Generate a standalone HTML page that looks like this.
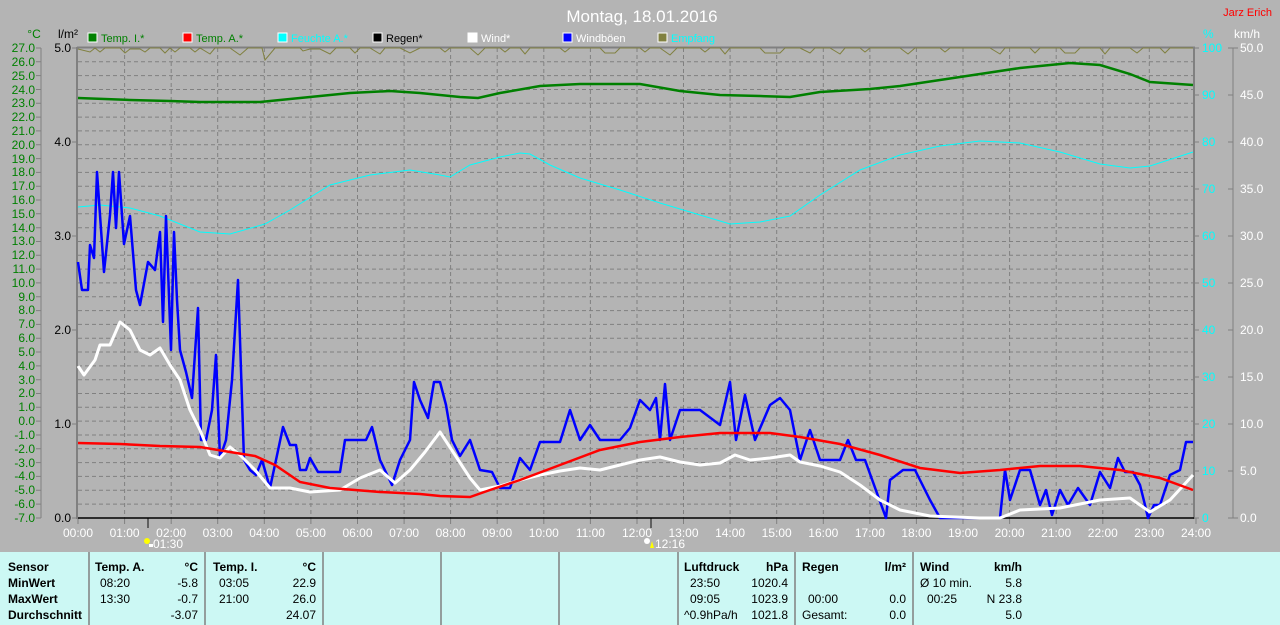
<!DOCTYPE html>
<html><head><meta charset="utf-8"><style>
html,body{margin:0;padding:0;background:#b4b4b4;}
svg{display:block;font-family:"Liberation Sans",sans-serif;}
</style></head><body>
<svg width="1280" height="625" xmlns="http://www.w3.org/2000/svg">
<rect width="1280" height="625" fill="#b4b4b4"/>
<text x="642" y="22" font-size="17" fill="#fff" text-anchor="middle">Montag, 18.01.2016</text>
<text x="1272" y="16" font-size="11" fill="#f00" text-anchor="end">Jarz Erich</text>
<!-- legend -->
<g font-size="11">
<rect x="88" y="33" width="9" height="9" fill="#008000" stroke="#fff"/><text x="101" y="42" fill="#008000">Temp. I.*</text>
<rect x="183" y="33" width="9" height="9" fill="#f00" stroke="#fff"/><text x="196" y="42" fill="#008000">Temp. A.*</text>
<rect x="278" y="33" width="9" height="9" fill="#0ff" stroke="#fff"/><text x="291" y="42" fill="#0ff">Feuchte A.*</text>
<rect x="373" y="33" width="9" height="9" fill="#000" stroke="#fff"/><text x="386" y="42" fill="#000">Regen*</text>
<rect x="468" y="33" width="9" height="9" fill="#fff" stroke="#fff"/><text x="481" y="42" fill="#fff">Wind*</text>
<rect x="563" y="33" width="9" height="9" fill="#00f" stroke="#fff"/><text x="576" y="42" fill="#fff">Windböen</text>
<rect x="658" y="33" width="9" height="9" fill="#808040" stroke="#fff"/><text x="671" y="42" fill="#0ff">Empfang</text>
</g>
<text x="34" y="38" font-size="12" fill="#008000" text-anchor="middle">°C</text>
<text x="58" y="38" font-size="12" fill="#000">l/m²</text>
<text x="1203" y="38" font-size="12" fill="#0ff">%</text>
<text x="1234" y="38" font-size="12" fill="#fff">km/h</text>
<!-- grid -->
<g stroke="#808080" stroke-dasharray="4,3" stroke-width="1">
<path d="M78 61.8H1193M78 75.6H1193M78 89.5H1193M78 103.3H1193M78 117.1H1193M78 130.9H1193M78 144.7H1193M78 158.6H1193M78 172.4H1193M78 186.2H1193M78 200H1193M78 213.8H1193M78 227.7H1193M78 241.5H1193M78 255.3H1193M78 269.1H1193M78 282.9H1193M78 296.8H1193M78 310.6H1193M78 324.4H1193M78 338.2H1193M78 352H1193M78 365.9H1193M78 379.7H1193M78 393.5H1193M78 407.3H1193M78 421.1H1193M78 435H1193M78 448.8H1193M78 462.6H1193M78 476.4H1193M78 490.2H1193M78 504.1H1193"/>
<path d="M124.6 48V518M171.2 48V518M217.7 48V518M264.3 48V518M310.9 48V518M357.5 48V518M404.1 48V518M450.6 48V518M497.2 48V518M543.8 48V518M590.4 48V518M637 48V518M683.5 48V518M730.1 48V518M776.7 48V518M823.3 48V518M869.9 48V518M916.4 48V518M963 48V518M1009.6 48V518M1056.2 48V518M1102.8 48V518M1149.3 48V518"/>
</g>
<!-- axes -->
<g stroke="#808080" stroke-width="1">
<path d="M41 48V518M36 48H41M36 61.8H41M36 75.6H41M36 89.5H41M36 103.3H41M36 117.1H41M36 130.9H41M36 144.7H41M36 158.6H41M36 172.4H41M36 186.2H41M36 200H41M36 213.8H41M36 227.7H41M36 241.5H41M36 255.3H41M36 269.1H41M36 282.9H41M36 296.8H41M36 310.6H41M36 324.4H41M36 338.2H41M36 352H41M36 365.9H41M36 379.7H41M36 393.5H41M36 407.3H41M36 421.1H41M36 435H41M36 448.8H41M36 462.6H41M36 476.4H41M36 490.2H41M36 504.1H41M36 518H41"/>
<path d="M72 48H77M72 142H77M72 236H77M72 330H77M72 424H77M72 518H77"/>
<path d="M1195 48H1199M1195 95H1199M1195 142H1199M1195 189H1199M1195 236H1199M1195 283H1199M1195 330H1199M1195 377H1199M1195 424H1199M1195 471H1199M1195 518H1199"/>
<path d="M1233 48V518M1228 48H1238M1228 95H1233M1228 142H1233M1228 189H1233M1228 236H1233M1228 283H1233M1228 330H1233M1228 377H1233M1228 424H1233M1228 471H1233M1228 518H1238"/>
<path d="M78 518V524M124.6 518V524M171.2 518V524M217.7 518V524M264.3 518V524M310.9 518V524M357.5 518V524M404.1 518V524M450.6 518V524M497.2 518V524M543.8 518V524M590.4 518V524M637 518V524M683.5 518V524M730.1 518V524M776.7 518V524M823.3 518V524M869.9 518V524M916.4 518V524M963 518V524M1009.6 518V524M1056.2 518V524M1102.8 518V524M1149.3 518V524M1196 518V524"/>
</g>
<path d="M148 518V528M651 518V528" stroke="#606060" stroke-width="2"/>
<path d="M77 47V519M77 47.5H1195M1194 47V519" stroke="#808080" stroke-width="2" fill="none"/>
<path d="M78 518H1194" stroke="#000" stroke-width="1.5"/>
<g font-size="12" fill="#008000" text-anchor="end">
<text x="35" y="52">27.0</text><text x="35" y="66">26.0</text><text x="35" y="80">25.0</text><text x="35" y="94">24.0</text><text x="35" y="107">23.0</text><text x="35" y="121">22.0</text><text x="35" y="135">21.0</text><text x="35" y="149">20.0</text><text x="35" y="163">19.0</text><text x="35" y="176">18.0</text><text x="35" y="190">17.0</text><text x="35" y="204">16.0</text><text x="35" y="218">15.0</text><text x="35" y="232">14.0</text><text x="35" y="245">13.0</text><text x="35" y="259">12.0</text><text x="35" y="273">11.0</text><text x="35" y="287">10.0</text><text x="35" y="301">9.0</text><text x="35" y="314">8.0</text><text x="35" y="328">7.0</text><text x="35" y="342">6.0</text><text x="35" y="356">5.0</text><text x="35" y="370">4.0</text><text x="35" y="384">3.0</text><text x="35" y="397">2.0</text><text x="35" y="411">1.0</text><text x="35" y="425">0.0</text><text x="35" y="439">-1.0</text><text x="35" y="453">-2.0</text><text x="35" y="467">-3.0</text><text x="35" y="480">-4.0</text><text x="35" y="494">-5.0</text><text x="35" y="508">-6.0</text><text x="35" y="522">-7.0</text>
</g>
<g font-size="12" fill="#000" text-anchor="end">
<text x="71" y="52">5.0</text><text x="71" y="146">4.0</text><text x="71" y="240">3.0</text><text x="71" y="334">2.0</text><text x="71" y="428">1.0</text><text x="71" y="522">0.0</text>
</g>
<g font-size="12" fill="#0ff">
<text x="1202" y="52">100</text><text x="1202" y="99">90</text><text x="1202" y="146">80</text><text x="1202" y="193">70</text><text x="1202" y="240">60</text><text x="1202" y="287">50</text><text x="1202" y="334">40</text><text x="1202" y="381">30</text><text x="1202" y="428">20</text><text x="1202" y="475">10</text><text x="1202" y="522">0</text>
</g>
<g font-size="12" fill="#fff">
<text x="1240" y="52">50.0</text><text x="1240" y="99">45.0</text><text x="1240" y="146">40.0</text><text x="1240" y="193">35.0</text><text x="1240" y="240">30.0</text><text x="1240" y="287">25.0</text><text x="1240" y="334">20.0</text><text x="1240" y="381">15.0</text><text x="1240" y="428">10.0</text><text x="1240" y="475">5.0</text><text x="1240" y="522">0.0</text>
</g>
<g font-size="12" fill="#fff" text-anchor="middle">
<text x="78" y="537">00:00</text><text x="124.6" y="537">01:00</text><text x="171.2" y="537">02:00</text><text x="217.7" y="537">03:00</text><text x="264.3" y="537">04:00</text><text x="310.9" y="537">05:00</text><text x="357.5" y="537">06:00</text><text x="404.1" y="537">07:00</text><text x="450.6" y="537">08:00</text><text x="497.2" y="537">09:00</text><text x="543.8" y="537">10:00</text><text x="590.4" y="537">11:00</text><text x="637" y="537">12:00</text><text x="683.5" y="537">13:00</text><text x="730.1" y="537">14:00</text><text x="776.7" y="537">15:00</text><text x="823.3" y="537">16:00</text><text x="869.9" y="537">17:00</text><text x="916.4" y="537">18:00</text><text x="963" y="537">19:00</text><text x="1009.6" y="537">20:00</text><text x="1056.2" y="537">21:00</text><text x="1102.8" y="537">22:00</text><text x="1149.3" y="537">23:00</text><text x="1196" y="537">24:00</text>
<text x="168" y="548">01:30</text><text x="670" y="548">12:16</text>
</g>
<circle cx="147" cy="541" r="3" fill="#ff0"/><rect x="149" y="544" width="4" height="3" fill="#fff"/>
<circle cx="647" cy="541" r="3" fill="#fff"/><path d="M650 548L652 541L654 548Z" fill="#ff0"/>
<!-- data -->
<polyline fill="none" stroke="#808040" stroke-width="1" points="78,49 90,52 95,48 100,52 105,48 120,48 125,53 130,49 140,49 145,52 150,48 160,48 165,53 170,48 175,52 180,48 190,48 195,52 200,48 210,54 215,48 230,48 240,55 248,48 262,48 265,60 275,48 300,48 303,51 310,49 320,49 330,54 336,48 350,48 355,53 360,48 370,48 380,54 385,48 400,48 410,53 420,48 440,48 445,52 450,48 470,48 478,55 485,48 500,48 505,52 510,48 520,48 525,54 530,48 560,48 565,52 570,48 600,48 605,53 615,53 620,48 640,48 645,52 650,48 660,48 670,55 677,48 700,48 705,52 710,48 720,48 725,54 730,48 760,48 765,53 780,53 785,48 800,48 810,53 815,48 830,48 840,54 845,48 860,48 865,52 870,48 900,48 908,54 915,48 940,48 945,52 950,48 990,48 1000,54 1005,48 1030,48 1035,53 1040,48 1060,48 1065,53 1075,53 1080,48 1100,48 1105,54 1110,48 1130,48 1137,53 1143,48 1160,48 1165,53 1170,48 1193,48"/>
<polyline fill="none" stroke="#0ff" stroke-width="1" points="78,207 100,205 130,208 160,216 200,232 230,234 265,224 290,210 330,185 370,175 410,170 440,175 450,177 470,165 500,157 520,153 530,154 550,165 580,178 620,190 660,203 700,215 730,224 760,222 790,216 820,195 860,170 900,155 940,146 980,141 1020,143 1060,152 1100,164 1130,168 1150,166 1193,152"/>
<polyline fill="none" stroke="#008000" stroke-width="2.5" points="78,98 130,100 170,101 200,102 260,102 300,98 350,93 390,91 420,93 460,97 478,98 500,93 540,86 580,84 640,84 680,91 720,95 760,96 790,97 820,92 870,89 900,86 940,80 980,74 1020,68 1070,63 1100,65 1130,74 1150,82 1193,85"/>
<polyline fill="none" stroke="#00f" stroke-width="2.5" stroke-linejoin="round" points="78,262 82,290 88,290 90,245 94,258 97,172 100,215 104,272 110,215 113,172 116,228 119,172 124,244 130,216 136,290 140,305 148,262 155,270 160,232 163,322 166,216 171,350 174,232 177,300 180,350 186,372 192,398 198,308 201,440 206,440 212,410 216,355 220,458 226,440 232,380 238,280 244,460 250,470 256,475 262,460 270,488 276,460 283,427 290,445 296,445 300,470 306,470 310,458 318,472 340,472 345,440 366,440 372,427 380,460 392,485 400,460 410,440 414,382 420,400 428,418 434,382 440,382 446,405 452,440 460,456 470,440 480,470 492,472 500,488 510,488 520,458 530,470 540,442 560,442 570,410 580,440 590,425 600,440 620,440 630,428 640,400 650,410 656,398 660,440 665,384 670,440 680,410 700,410 720,425 730,382 736,440 745,395 755,440 770,405 780,398 790,410 800,460 810,430 820,460 840,460 848,440 856,460 865,460 886,518 890,480 903,470 915,470 930,500 940,518 1000,518 1005,470 1010,500 1020,470 1030,470 1040,505 1046,490 1052,515 1060,490 1068,505 1078,488 1090,505 1100,472 1110,488 1118,458 1125,472 1133,472 1140,485 1145,505 1148,518 1154,505 1160,505 1170,475 1180,470 1186,442 1193,442"/>
<polyline fill="none" stroke="#fff" stroke-width="3" stroke-linejoin="round" points="78,366 84,375 95,360 100,345 110,345 120,322 130,330 140,350 150,355 160,348 170,365 180,380 190,410 200,430 210,455 220,458 230,447 240,455 255,470 270,488 290,488 310,492 340,490 360,478 380,470 395,483 410,470 425,452 440,432 455,455 470,478 480,490 500,486 520,480 540,475 560,471 580,468 600,470 620,465 640,460 660,457 680,462 700,465 720,463 735,455 750,460 770,458 790,455 800,462 820,466 840,472 860,485 880,500 900,510 930,516 980,518 1000,518 1020,510 1060,508 1100,500 1130,498 1150,512 1170,500 1193,475"/>
<polyline fill="none" stroke="#f00" stroke-width="2.5" points="78,443 120,444 160,446 200,447 230,452 255,456 275,465 300,482 330,488 380,492 420,494 440,496 470,497 490,490 520,480 560,465 600,450 640,442 680,437 720,433 770,433 800,437 840,444 880,455 920,468 960,473 1000,470 1040,466 1080,466 1120,470 1160,478 1193,490"/>
<!-- table -->
<rect x="0" y="552" width="1280" height="73" fill="#ccf8f4"/>
<path d="M89 552V625M205 552V625M323 552V625M441 552V625M559 552V625M678 552V625M795 552V625M913 552V625" stroke="#808080" stroke-width="1.5"/>
<g font-size="12" fill="#000">
<g font-weight="bold"><text x="8" y="571">Sensor</text><text x="8" y="587">MinWert</text><text x="8" y="603">MaxWert</text><text x="8" y="619">Durchschnitt</text>
<text x="95" y="571">Temp. A.</text><text x="198" y="571" text-anchor="end">°C</text>
<text x="213" y="571">Temp. I.</text><text x="316" y="571" text-anchor="end">°C</text>
<text x="684" y="571">Luftdruck</text><text x="788" y="571" text-anchor="end">hPa</text>
<text x="802" y="571">Regen</text><text x="906" y="571" text-anchor="end">l/m²</text>
<text x="920" y="571">Wind</text><text x="1022" y="571" text-anchor="end">km/h</text></g>
<text x="100" y="587">08:20</text><text x="198" y="587" text-anchor="end">-5.8</text>
<text x="100" y="603">13:30</text><text x="198" y="603" text-anchor="end">-0.7</text>
<text x="198" y="619" text-anchor="end">-3.07</text>
<text x="219" y="587">03:05</text><text x="316" y="587" text-anchor="end">22.9</text>
<text x="219" y="603">21:00</text><text x="316" y="603" text-anchor="end">26.0</text>
<text x="316" y="619" text-anchor="end">24.07</text>
<text x="690" y="587">23:50</text><text x="788" y="587" text-anchor="end">1020.4</text>
<text x="690" y="603">09:05</text><text x="788" y="603" text-anchor="end">1023.9</text>
<text x="684" y="619">^0.9hPa/h</text><text x="788" y="619" text-anchor="end">1021.8</text>
<text x="808" y="603">00:00</text><text x="906" y="603" text-anchor="end">0.0</text>
<text x="802" y="619">Gesamt:</text><text x="906" y="619" text-anchor="end">0.0</text>
<text x="920" y="587">Ø 10 min.</text><text x="1022" y="587" text-anchor="end">5.8</text>
<text x="927" y="603">00:25</text><text x="1022" y="603" text-anchor="end">N 23.8</text>
<text x="1022" y="619" text-anchor="end">5.0</text>
</g>
</svg>
</body></html>
